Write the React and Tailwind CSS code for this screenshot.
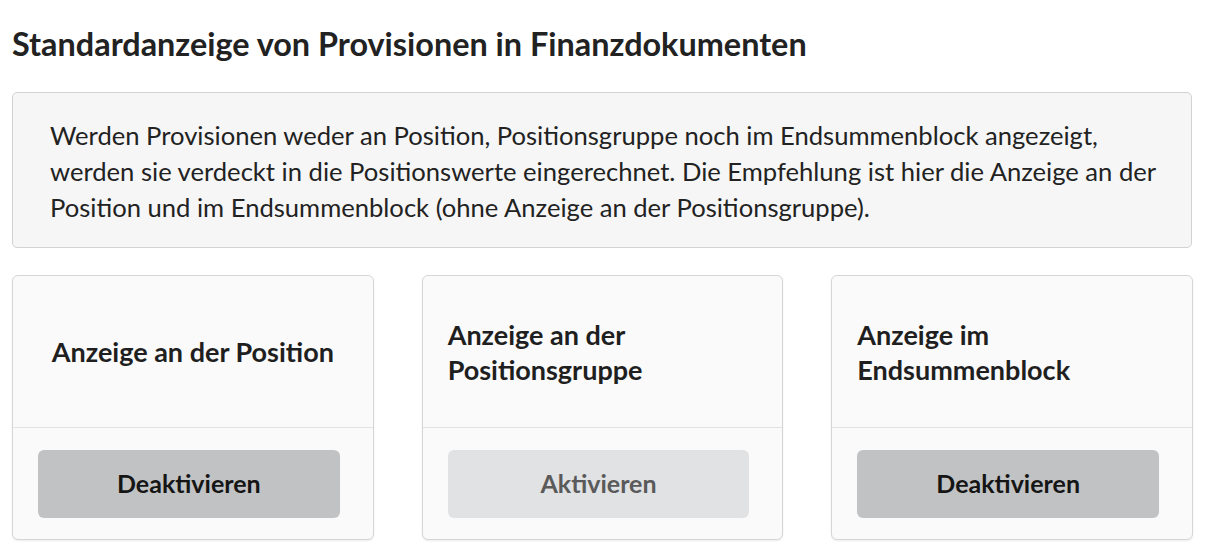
import React from 'react';

const options = [
  { title: 'Anzeige an der Position', label: 'Deaktivieren', active: true },
  { title: 'Anzeige an der Positionsgruppe', label: 'Aktivieren', active: false },
  { title: 'Anzeige im Endsummenblock', label: 'Deaktivieren', active: true }
];

function OptionCard({ title, label, active }) {
  return (
    <div className="flex flex-col rounded-[6px] border border-[#d6d6d6] bg-[#fafafa] shadow-[0_1px_2px_rgba(0,0,0,0.08)]">
      <div className="flex h-[151px] items-center justify-center px-[25px]">
        <h3 className="text-left text-[27px] font-bold leading-[35px] text-[#1f1f1f]">{title}</h3>
      </div>
      <div className="border-t border-[#e2e2e2] pb-[21px] pl-[25px] pr-[33px] pt-[22px]">
        <button
          className={
            active
              ? 'h-[68px] w-full rounded-[6px] bg-[#c1c2c4] text-[25px] font-bold text-[#151515]'
              : 'h-[68px] w-full rounded-[6px] bg-[#e1e2e4] text-[25px] font-bold text-[#5a5a5a]'
          }
        >
          {label}
        </button>
      </div>
    </div>
  );
}

export default function App() {
  return (
    <div className="min-h-screen bg-white px-3 pt-[25px] font-['Lato','Noto_Sans',sans-serif] text-[#222]">
      <h1 className="mb-[29px] text-[32.4px] font-bold leading-[38px] text-[#222]">
        Standardanzeige von Provisionen in Finanzdokumenten
      </h1>

      {/* Hinweis */}
      <div className="w-[1180px] rounded-[5px] border border-[#d2d2d2] bg-[#f6f6f6] pb-[22px] pl-[37px] pr-[16px] pt-[24px]">
        <p className="text-[25.6px] leading-[36px] text-[#222]">
          Werden Provisionen weder an Position, Positionsgruppe noch im Endsummenblock angezeigt,
          <br />
          werden sie verdeckt in die Positionswerte eingerechnet. Die Empfehlung ist hier die Anzeige an der
          <br />
          Position und im Endsummenblock (ohne Anzeige an der Positionsgruppe).
        </p>
      </div>

      <div className="mt-[27px] grid w-[1181px] grid-cols-3 gap-12">
        {options.map(opt => (
          <OptionCard key={opt.title} {...opt} />
        ))}
      </div>
    </div>
  );
}
